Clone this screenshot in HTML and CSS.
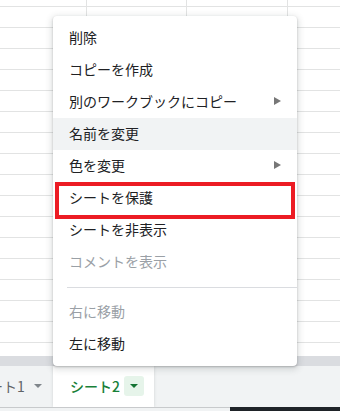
FILE: index.html
```html
<!DOCTYPE html>
<html lang="ja">
<head>
  <meta charset="UTF-8">
  <meta name="viewport" content="width=device-width, initial-scale=1.0">
  <title>シートメニュー</title>
  <link rel="stylesheet" href="styles.css">
</head>
<body>
  <div class="sheet"></div>
  <div class="scroll-band"></div>

  <div class="tab-bar">
    <div class="tab">
      <span class="tab-name">シート1</span>
      <span class="caret"></span>
    </div>
    <div class="tab active">
      <span class="tab-name">シート2</span>
      <span class="tab-drop"><span class="caret"></span></span>
    </div>
  </div>

  <div class="footer">
    <div class="footer-left"></div>
    <div class="footer-dark"></div>
  </div>

  <!-- context menu over the sheet -->
  <div class="menu">
    <div class="menu-item">削除</div>
    <div class="menu-item">コピーを作成</div>
    <div class="menu-item">別のワークブックにコピー<span class="submenu"></span></div>
    <div class="menu-item hover">名前を変更</div>
    <div class="menu-item">色を変更<span class="submenu"></span></div>
    <div class="menu-item">シートを保護</div>
    <div class="menu-item">シートを非表示</div>
    <div class="menu-item disabled">コメントを表示</div>
    <div class="menu-sep"></div>
    <div class="menu-item disabled">右に移動</div>
    <div class="menu-item">左に移動</div>
  </div>

  <!-- red annotation box -->
  <div class="mark"></div>
</body>
</html>
```

FILE: styles.css
```css
body, html {
  margin: 0;
  padding: 0;
  width: 340px;
  height: 411px;
  overflow: hidden;
  background: #fff;
  font-family: "Noto Sans CJK JP", "Noto Sans", sans-serif;
}
.sheet {
  height: 356px;
  background-color: #fff;
  background-image:
    linear-gradient(to right, transparent 86px, #e2e3e3 86px, #e2e3e3 87px, transparent 87px, transparent 186px, #e2e3e3 186px, #e2e3e3 187px, transparent 187px, transparent 287px, #e2e3e3 287px, #e2e3e3 288px, transparent 288px),
    repeating-linear-gradient(to bottom, transparent 0, transparent 6px, #e2e3e3 6px, #e2e3e3 7px, transparent 7px, transparent 21px);
}
.scroll-band {
  height: 10px;
  background: #dadce0;
}
.tab-bar {
  height: 41px;
  background: #f1f3f4;
  display: flex;
  align-items: stretch;
}
.tab {
  display: flex;
  align-items: center;
  font-size: 14px;
  color: #5f6368;
  padding-bottom: 2px;
  box-sizing: border-box;
}
.tab:first-child {
  margin-left: -25px;
  width: 78px;
  gap: 9px;
}
.tab .caret {
  width: 0;
  height: 0;
  border-left: 4px solid transparent;
  border-right: 4px solid transparent;
  border-top: 4px solid #80868b;
  margin-top: 1px;
}
.tab.active {
  width: 101px;
  background: #fff;
  color: #188038;
  font-weight: 500;
  padding-left: 17px;
  gap: 4px;
  box-shadow: 0 0 3px rgba(60, 64, 67, 0.18);
}
.tab-drop {
  width: 20px;
  height: 20px;
  border-radius: 3px;
  background: #e6f4ea;
  display: flex;
  align-items: center;
  justify-content: center;
}
.tab-drop .caret {
  border-top-color: #137333;
}
.footer {
  height: 4px;
  display: flex;
}
.footer-left {
  width: 230px;
  border-top: 1px solid #c8cacc;
  background: #f1f3f4;
}
.footer-dark {
  flex: 1;
  background: #1f2328;
}
.menu {
  position: absolute;
  left: 53px;
  top: 16px;
  width: 244px;
  padding: 6px 0;
  background: #fff;
  border-radius: 4px;
  box-shadow: 0 1px 2px rgba(60, 64, 67, 0.3), 0 2px 6px 2px rgba(60, 64, 67, 0.15);
}
.menu-item {
  height: 32px;
  display: flex;
  align-items: center;
  justify-content: space-between;
  padding: 0 16px 3px;
  box-sizing: border-box;
  font-size: 14px;
  color: #202124;
}
.menu-item.hover {
  background: #f1f3f4;
}
.menu-item.disabled {
  color: #9aa0a6;
}
.submenu {
  width: 0;
  height: 0;
  border-top: 4px solid transparent;
  border-bottom: 4px solid transparent;
  border-left: 7px solid #777;
}
.menu-sep {
  height: 1px;
  background: #dadce0;
  margin: 9px 0 8px 14px;
}
.mark {
  position: absolute;
  left: 55px;
  top: 182px;
  width: 232px;
  height: 29px;
  border: 4px solid #ec1c24;
}
```
